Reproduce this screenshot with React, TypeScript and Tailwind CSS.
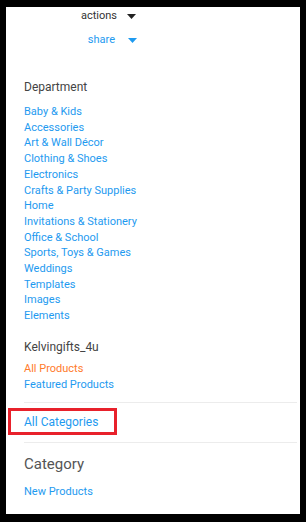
import React from 'react';

const departments = [
  'Baby & Kids',
  'Accessories',
  'Art & Wall Décor',
  'Clothing & Shoes',
  'Electronics',
  'Crafts & Party Supplies',
  'Home',
  'Invitations & Stationery',
  'Office & School',
  'Sports, Toys & Games',
  'Weddings',
  'Templates',
  'Images',
  'Elements',
];

function Caret({ color }: { color: string }) {
  return (
    <svg width="9" height="5" viewBox="0 0 9 5" className="block">
      <polygon points="0,0 9,0 4.5,5" fill={color} />
    </svg>
  );
}

export default function App() {
  return (
    <div className="w-[306px] h-[522px] bg-black pt-[7px] pl-[6px] pr-[6px] pb-[8px] font-['Roboto',sans-serif]">
      <div className="h-full bg-white pt-[1px] pl-[18px] pr-[3px]">
        {/* top menu */}
        <div className="flex items-center h-[16px]">
          <span className="w-[93px] text-right text-[11px] leading-[16px] text-[#333]">actions</span>
          <span className="ml-[10px]"><Caret color="#222" /></span>
        </div>
        <div className="flex items-center h-[16px] mt-[8px]">
          <span className="w-[91px] text-right text-[11px] leading-[16px] text-[#1e9af0]">share</span>
          <span className="ml-[13px]"><Caret color="#1e9af0" /></span>
        </div>

        {/* department */}
        <div className="mt-[31px] text-[12px] leading-[17px] text-[#444]">Department</div>
        <ul className="mt-[8px]">
          {departments.map((d) => (
            <li key={d} className="text-[11px] leading-[15.7px] text-[#1e9af0]">{d}</li>
          ))}
        </ul>

        {/* store */}
        <div className="mt-[15px] text-[12px] leading-[17px] text-[#444]">Kelvingifts_4u</div>
        <ul className="mt-[5px]">
          <li className="text-[11px] leading-[15.7px] text-[#ff7b2c]">All Products</li>
          <li className="text-[11px] leading-[15.7px] text-[#1e9af0]">Featured Products</li>
        </ul>

        <div className="mt-[10px] border-t border-[#ececec]" />
        <div className="relative mt-[11px] text-[12px] leading-[16px] text-[#1e9af0]">
          All Categories
          <div className="absolute left-[-16px] top-[-6px] w-[109px] h-[27px] border-[3px] border-[#e8212b]" />
        </div>
        <div className="mt-[12px] border-t border-[#ececec]" />

        <div className="mt-[11px] text-[15px] leading-[20px] text-[#555]">Category</div>
        <div className="mt-[10px] text-[11px] leading-[16px] text-[#1e9af0]">New Products</div>
      </div>
    </div>
  );
}
